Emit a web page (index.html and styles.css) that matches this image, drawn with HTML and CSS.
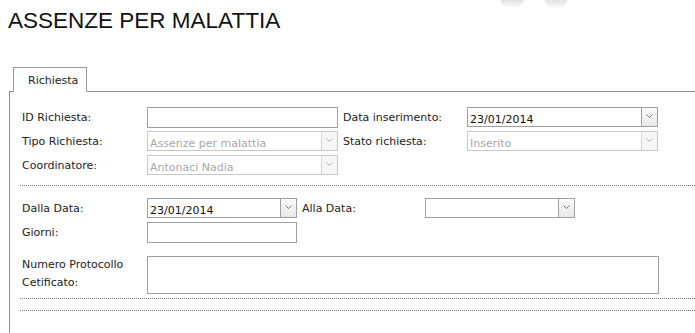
FILE: index.html
```html
<!DOCTYPE html>
<html lang="it">
<head>
    <meta charset="UTF-8">
    <title>Assenze per malattia</title>
    <link rel="stylesheet" href="styles.css">
</head>
<body>
    <div class="deco">
        <span class="deco-dot"></span>
        <span class="deco-dot"></span>
    </div>

    <h1 class="page-title">ASSENZE PER MALATTIA</h1>

    <div class="tabs">
        <div class="tab-strip">
            <div class="tab">Richiesta</div>
        </div>
        <div class="panel">
            <div class="section section-head">
                <div class="row">
                    <span class="lbl">ID Richiesta:</span>
                    <input class="txt w-wide" type="text">
                    <span class="lbl lbl-second">Data inserimento:</span>
                    <div class="combo w-wide">
                        <span class="combo-value">23/01/2014</span>
                        <span class="combo-btn"><svg width="7" height="4" viewBox="0 0 7 4"><polyline points="0.5,0.5 3.5,3.5 6.5,0.5" fill="none" stroke="currentColor" stroke-width="1"/></svg></span>
                    </div>
                </div>
                <div class="row">
                    <span class="lbl">Tipo Richiesta:</span>
                    <div class="combo w-wide disabled">
                        <span class="combo-value">Assenze per malattia</span>
                        <span class="combo-btn"><svg width="7" height="4" viewBox="0 0 7 4"><polyline points="0.5,0.5 3.5,3.5 6.5,0.5" fill="none" stroke="currentColor" stroke-width="1"/></svg></span>
                    </div>
                    <span class="lbl lbl-second">Stato richiesta:</span>
                    <div class="combo w-wide disabled">
                        <span class="combo-value">Inserito</span>
                        <span class="combo-btn"><svg width="7" height="4" viewBox="0 0 7 4"><polyline points="0.5,0.5 3.5,3.5 6.5,0.5" fill="none" stroke="currentColor" stroke-width="1"/></svg></span>
                    </div>
                </div>
                <div class="row">
                    <span class="lbl">Coordinatore:</span>
                    <div class="combo w-wide disabled">
                        <span class="combo-value">Antonaci Nadia</span>
                        <span class="combo-btn"><svg width="7" height="4" viewBox="0 0 7 4"><polyline points="0.5,0.5 3.5,3.5 6.5,0.5" fill="none" stroke="currentColor" stroke-width="1"/></svg></span>
                    </div>
                </div>
            </div>

            <div class="separator"></div>

            <div class="section section-dates">
                <div class="row">
                    <span class="lbl">Dalla Data:</span>
                    <div class="combo w-short">
                        <span class="combo-value">23/01/2014</span>
                        <span class="combo-btn"><svg width="7" height="4" viewBox="0 0 7 4"><polyline points="0.5,0.5 3.5,3.5 6.5,0.5" fill="none" stroke="currentColor" stroke-width="1"/></svg></span>
                    </div>
                    <span class="lbl lbl-third">Alla Data:</span>
                    <div class="combo w-short">
                        <span class="combo-value"></span>
                        <span class="combo-btn"><svg width="7" height="4" viewBox="0 0 7 4"><polyline points="0.5,0.5 3.5,3.5 6.5,0.5" fill="none" stroke="currentColor" stroke-width="1"/></svg></span>
                    </div>
                </div>
                <div class="row">
                    <span class="lbl">Giorni:</span>
                    <input class="txt w-short" type="text">
                </div>
                <div class="row row-area">
                    <span class="lbl lbl-multi">Numero Protocollo<br>Cetificato:</span>
                    <textarea class="area"></textarea>
                </div>
            </div>

            <div class="separator sep-tight"></div>
            <div class="separator sep-last"></div>
        </div>
    </div>
</body>
</html>
```

FILE: styles.css
```css
* {
    margin: 0;
    padding: 0;
    box-sizing: border-box;
}

html, body {
    height: 100%;
    overflow: hidden;
}

body {
    font-family: "DejaVu Sans", Verdana, sans-serif;
    font-size: 11px;
    color: #222;
    background-color: #fff;
    display: flex;
    flex-direction: column;
}

/* faint decorative bubbles peeking from the top edge */
.deco {
    position: absolute;
    top: -15px;
    left: 500px;
    display: flex;
    gap: 20px;
}

.deco-dot {
    width: 24px;
    height: 24px;
    border-radius: 50%;
    background: linear-gradient(to bottom, #fff 50%, #e2e2e2 62%, #fff 100%);
}

.page-title {
    font-family: "Liberation Sans", Arial, sans-serif;
    font-size: 22.5px;
    font-weight: normal;
    line-height: 25px;
    color: #111;
    padding: 8px 0 0 8px;
}

.tabs {
    flex: 1;
    display: flex;
    flex-direction: column;
    margin: 34px 0 0 9px;
}

.tab-strip {
    display: flex;
    padding-left: 4px;
}

.tab {
    width: 74px;
    height: 25px;
    border: 1px solid #999;
    border-bottom: 1px solid #fff;
    margin-bottom: -1px;
    background-color: #fff;
    padding: 6px 0 0 14px;
    position: relative;
    z-index: 1;
    color: #222;
}

.panel {
    flex: 1;
    border-top: 1px solid #8c8c8c;
    border-left: 1px solid #8c8c8c;
    padding-left: 10px;
}

.section {
    padding-left: 2px;
}

.section-head {
    padding-top: 15px;
    padding-bottom: 6px;
}

.section-dates {
    padding-top: 12px;
}

.row {
    display: flex;
    align-items: center;
    height: 20px;
    margin-bottom: 4px;
}

.row-area {
    align-items: flex-start;
    height: auto;
    margin-top: 14px;
}

.lbl {
    width: 125px;
    flex-shrink: 0;
    color: #222;
}

.lbl-second {
    width: 124px;
    margin-left: 5px;
}

.lbl-third {
    width: 123px;
    margin-left: 5px;
}

.lbl-multi {
    line-height: 18px;
}

.txt {
    height: 21px;
    border: 1px solid #a0a0a0;
    background-color: #fff;
    outline: none;
    font: inherit;
}

.w-wide {
    width: 191px;
}

.w-short {
    width: 150px;
}

.combo {
    height: 20px;
    border: 1px solid #a0a0a0;
    background-color: #fff;
    display: flex;
}

.combo-value {
    flex: 1;
    padding: 4px 0 0 2px;
    font-size: 11px;
    line-height: 15px;
    color: #111;
    white-space: nowrap;
    overflow: hidden;
}

.combo-btn {
    width: 16px;
    border-left: 1px solid #a0a0a0;
    background: linear-gradient(to bottom, #fafafa, #e8e8e8);
    color: #777;
    display: flex;
    justify-content: center;
    padding-top: 6px;
}

.combo.disabled {
    border-color: #c8c8c8;
}

.combo.disabled .combo-value {
    color: #a8a8a8;
}

.combo.disabled .combo-btn {
    border-left-color: #d4d4d4;
    background: #f6f6f6;
    color: #b4b4b4;
}

.area {
    width: 512px;
    height: 38px;
    border: 1px solid #a0a0a0;
    resize: none;
    outline: none;
    font: inherit;
}

.separator {
    height: 0;
    border-top: 1px dotted #7a7a7a;
}

.sep-tight {
    margin-top: 0;
}

.sep-last {
    margin-top: 11px;
}
```
